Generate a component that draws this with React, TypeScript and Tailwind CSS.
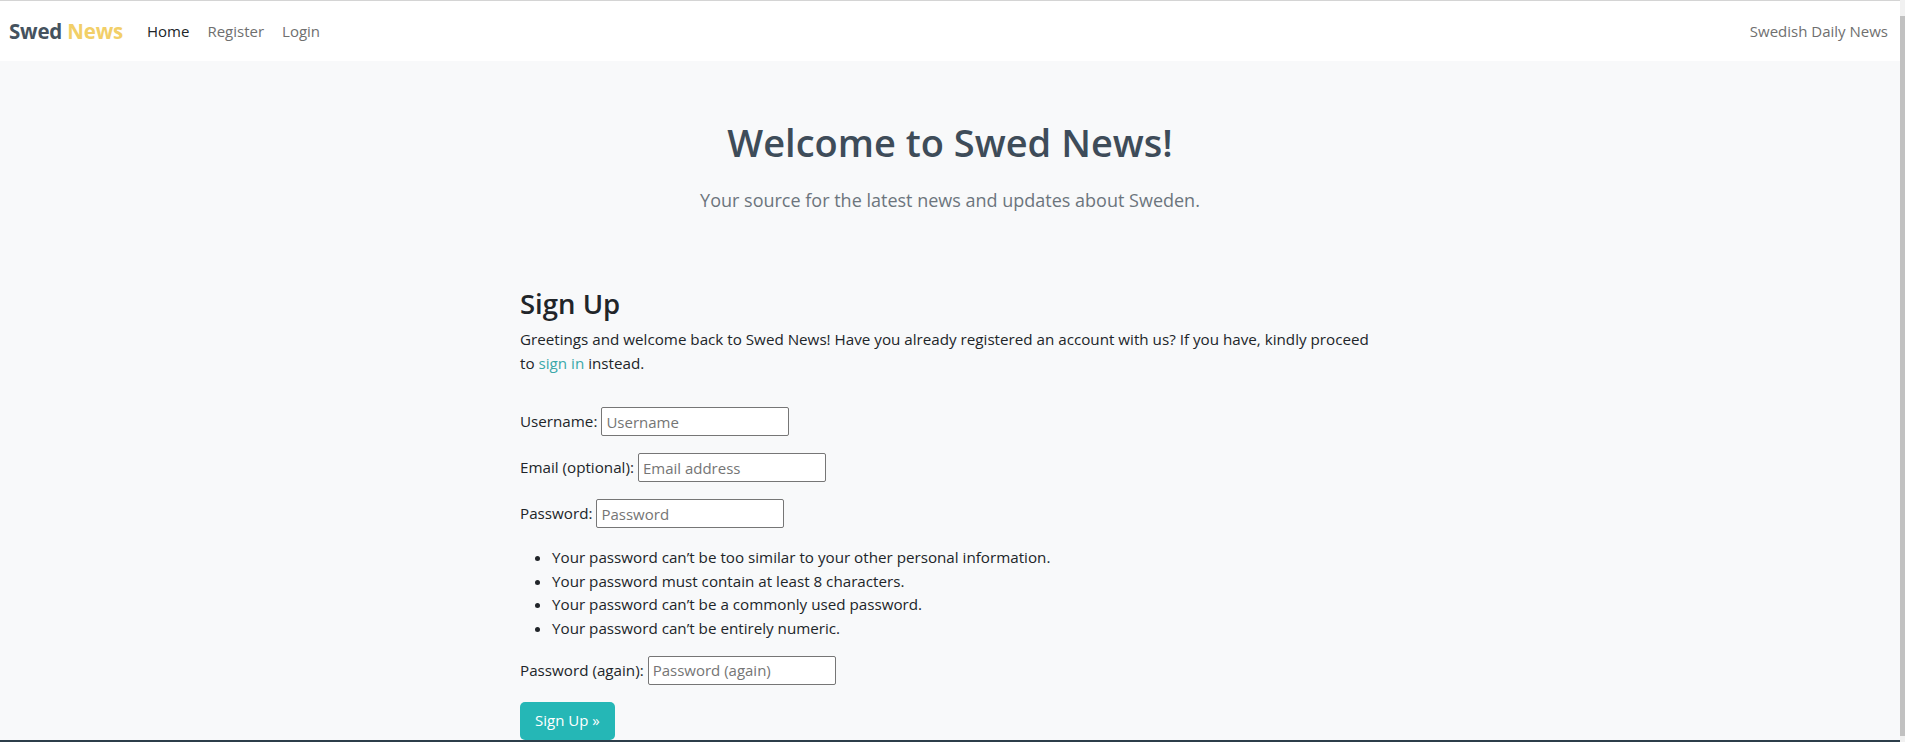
import React from "react";

const font = { fontFamily: '"Open Sans", "Noto Sans", sans-serif' };

const rules = [
  "Your password can’t be too similar to your other personal information.",
  "Your password must contain at least 8 characters.",
  "Your password can’t be a commonly used password.",
  "Your password can’t be entirely numeric.",
];

function Field({ label, placeholder, type = "text" }: { label: string; placeholder: string; type?: string }) {
  return (
    <p className="flex items-center h-[29px]">
      <label className="mr-[4px]">{label}</label>
      <input
        type={type}
        placeholder={placeholder}
        className="w-[188px] h-[29px] px-[4px] border border-[#767676] rounded-[2px] bg-white text-[15px] placeholder:text-[#757575] outline-none"
      />
    </p>
  );
}

export default function App() {
  return (
    <div className="flex h-[742px] w-full overflow-hidden bg-[#f8f9fa] text-[#212529]" style={font}>
      <div className="flex flex-1 flex-col min-w-0 border-t border-[#d4d4d4]">
        {/* navbar */}
        <nav className="flex h-[60px] shrink-0 items-center bg-white px-[9px]">
          <a className="text-[20.5px] font-bold tracking-[-0.2px]">
            <span className="text-[#45525e]">Swed</span> <span className="text-[#f2cf68]">News</span>
          </a>
          <ul className="ml-[24px] flex gap-[18px] text-[15px]">
            <li className="text-[#212529]">Home</li>
            <li className="text-[#6f6f6f]">Register</li>
            <li className="text-[#6f6f6f]">Login</li>
          </ul>
          <span className="ml-auto mr-[3px] text-[15px] text-[#6f6f6f]">Swedish Daily News</span>
        </nav>

        {/* main */}
        <main className="flex-1 overflow-hidden">
          <div className="mt-[58px] text-center">
            <h1 className="text-[38px] leading-[46px] font-semibold text-[#3e4c59]">Welcome to Swed News!</h1>
            <p className="mt-[21px] text-[18px] leading-[28px] font-normal text-[#6c757d]">
              Your source for the latest news and updates about Sweden.
            </p>
          </div>

          <section className="mx-auto mt-[72px] w-[860px] text-[15.2px] leading-[23.5px]">
            <h2 className="text-[27.5px] leading-[35px] font-semibold text-[#212529]">Sign Up</h2>
            <p className="mt-[7px]">
              Greetings and welcome back to Swed News! Have you already registered an account with us? If you have, kindly proceed to{" "}
              <a className="text-[#3aa8a9]">sign in</a> instead.
            </p>

            <form className="mt-[32px]">
              <div className="flex flex-col gap-[17px]">
                <Field label="Username:" placeholder="Username" />
                <Field label="Email (optional):" placeholder="Email address" type="email" />
                <Field label="Password:" placeholder="Password" type="password" />
              </div>
              <ul className="mt-[18px] list-disc pl-[32px]">
                {rules.map((r) => (
                  <li key={r} className="leading-[23.7px]">{r}</li>
                ))}
              </ul>
              <div className="mt-[15px]">
                <Field label="Password (again):" placeholder="Password (again)" type="password" />
              </div>
              <button
                type="button"
                className="mt-[17px] h-[38px] rounded-[5px] bg-[#25b7b6] px-[15px] text-[15px] text-white"
              >
                Sign Up »
              </button>
            </form>
          </section>
        </main>

        <footer className="h-[2px] shrink-0 bg-[#2c3e4a]" />
      </div>

      {/* scrollbar strip */}
      <div className="flex w-[5px] shrink-0 flex-col bg-[#f1f1f1]">
        <div className="mt-[16px] h-[720px] bg-[#c1c1c1]" />
      </div>
    </div>
  );
}
